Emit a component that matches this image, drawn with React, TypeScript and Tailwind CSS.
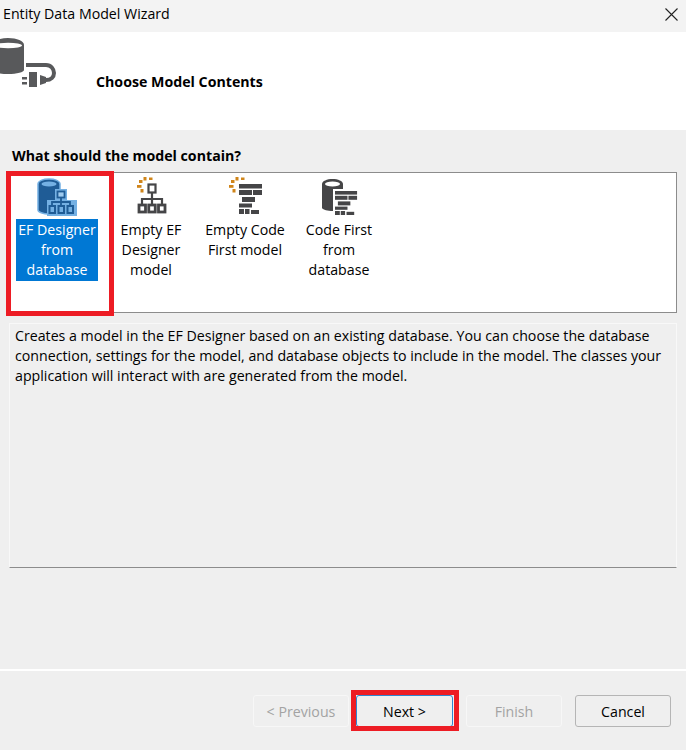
import { FC } from "react";

const dark = "#454547";

const Sparks = ({ x, y }: { x: number; y: number }) => (
    <g fill="#d0851a" transform={`translate(${x} ${y})`}>
        <rect x="6.500" y="0" width="3" height="3.500" />
        <rect x="12" y="0.500" width="3.500" height="2.500" />
        <rect x="2" y="3" width="3.500" height="3" />
        <rect x="0" y="8" width="4.500" height="2.800" />
        <rect x="3.500" y="12" width="3" height="3.500" />
    </g>
);

const BrickStack = () => (
    <g fill={dark}>
        <rect x="0" y="0" width="23" height="4.500" />
        <rect x="0" y="6" width="13" height="5" />
        <rect x="14" y="6" width="9" height="5" />
        <rect x="3" y="13" width="13" height="5" />
        <rect x="0" y="19.500" width="13" height="4" />
        <rect x="0" y="25" width="5" height="5" />
        <rect x="6" y="25" width="4.500" height="5" />
        <rect x="12" y="26" width="8" height="4" />
    </g>
);

const PlugIcon = () => (
    <svg width="60" height="60" viewBox="0 0 60 60" className="shrink-0">
        <path d="M-8 13c0-4 7-7 16-7s16 3 16 7v25c0 2-7 4-16 4s-16-2-16-4z" fill="#58595b" />
        <ellipse cx="8" cy="13.500" rx="14" ry="2.800" fill="#fff" />
        <path d="M26 33h20c5 0 8 4 8 8s-3 7-8 7h-6" fill="none" stroke="#58595b" strokeWidth="4" />
        <path d="M40 43l6 2v6l-6 2z" fill="#58595b" />
        <rect x="29" y="40" width="8" height="15" fill="#58595b" />
        <rect x="22" y="45" width="5" height="2.500" fill="#58595b" />
        <rect x="22" y="50" width="5" height="2.500" fill="#58595b" />
    </svg>
);

const EfDbIcon = () => (
    <svg width="42" height="42" viewBox="0 0 42 42">
        <path d="M2 8c0-3 5-5 11-5s11 2 11 5v28c-3 2-7 2-11 2-6 0-11-2-11-4z" fill="#1f5c96" stroke="#74b0e3" strokeWidth="1.500" />
        <ellipse cx="13" cy="8" rx="7.500" ry="2.500" fill="#74b0e3" />
        <path d="M19 13h12v11h10v16H11V24h8z" fill="#74b0e3" />
        <rect x="21.500" y="15.500" width="7" height="6" fill="#9fcbef" stroke="#1f5c96" strokeWidth="1.800" />
        <path d="M25 22v8M16 30v-4h18v4" fill="none" stroke="#1f5c96" strokeWidth="1.800" />
        <g fill="#74b0e3" stroke="#1f5c96" strokeWidth="2">
            <rect x="13.500" y="30" width="5.500" height="7" />
            <rect x="22.500" y="30" width="5.500" height="7" />
            <rect x="31.500" y="30" width="5.500" height="7" />
        </g>
    </svg>
);

const EmptyEfIcon = () => (
    <svg width="40" height="40" viewBox="0 0 40 40">
        <Sparks x={6} y={1} />
        <g fill="#fff" stroke={dark} strokeWidth="2.200">
            <rect x="17.500" y="8.500" width="7" height="8" />
            <path d="M21 17v11M11 28v-5h20v5" fill="none" />
        </g>
        <g fill="#fff" stroke={dark} strokeWidth="2.800">
            <rect x="8" y="29" width="6.500" height="7" />
            <rect x="17.750" y="29" width="6.500" height="7" />
            <rect x="27.500" y="29" width="6.500" height="7" />
        </g>
    </svg>
);

const EmptyCodeIcon = () => (
    <svg width="40" height="40" viewBox="0 0 40 40">
        <Sparks x={4} y={1} />
        <g transform="translate(14 8)">
            <BrickStack />
        </g>
    </svg>
);

const CodeDbIcon = () => (
    <svg width="40" height="40" viewBox="0 0 40 40">
        <path d="M3 8c0-3 5-5 10.500-5S24 5 24 8v24c-2 2-6 3-10.500 3S4 34 3 32z" fill={dark} />
        <ellipse cx="13.500" cy="8" rx="7.500" ry="2.500" fill="#fff" />
        <rect x="14" y="13" width="26" height="27" fill="#fff" />
        <g transform="translate(16 15) scale(0.96 0.8)">
            <BrickStack />
        </g>
    </svg>
);

const models = [
    { label: ["EF Designer", "from", "database"], icon: <EfDbIcon />, selected: true },
    { label: ["Empty EF", "Designer", "model"], icon: <EmptyEfIcon /> },
    { label: ["Empty Code", "First model"], icon: <EmptyCodeIcon /> },
    { label: ["Code First", "from", "database"], icon: <CodeDbIcon /> },
];

const WizardButton: FC<{ label: string; disabled?: boolean; focused?: boolean; className?: string }> = ({
    label,
    disabled,
    focused,
    className,
}) => (
    <button
        className={`h-8 pt-[1px] rounded-[3px] border text-[14.2px] ${className} ${
            disabled
                ? "border-[#f7f7f7] text-[#a3a3a3]"
                : focused
                  ? "border-[#2f86d0] text-black"
                  : "border-[#b5b5b5] text-black"
        }`}
    >
        {label}
    </button>
);

const App: FC = () => {
    return (
        <div className="relative flex flex-col w-[686px] h-[750px] overflow-hidden bg-[#efefef] text-black font-['Open_Sans','Liberation_Sans',sans-serif]">
            {/* Title bar */}
            <div className="flex items-center justify-between h-8 pb-1 pl-[3px] pr-[8px] bg-[#f3f3f3] text-[14.2px]">
                <span>Entity Data Model Wizard</span>
                <svg width="13" height="13" viewBox="0 0 13 13" stroke="#222" strokeWidth="1.100">
                    <path d="M0.500 0.500l12 12M12.500 0.500l-12 12" />
                </svg>
            </div>

            {/* Header */}
            <div className="flex h-[98px] bg-white">
                <PlugIcon />
                <h1 className="ml-9 mt-[40px] text-[14.2px] font-bold leading-5">Choose Model Contents</h1>
            </div>

            {/* Model list */}
            <div className="px-[9px] pt-[16px]">
                <h2 className="pl-[3px] h-[26px] text-[14.2px] font-bold leading-5">What should the model contain?</h2>
                <div className="flex h-[141px] gap-[4px] pl-[2px] bg-white border border-[#8c8c8c]">
                    {models.map((m) => (
                        <div key={m.label.join(" ")} className="flex flex-col items-center w-[90px] pt-[3px]">
                            <div className="h-[43px]">{m.icon}</div>
                            <div className={`w-[82px] py-[1px] text-center text-[14.2px] leading-5 ${m.selected ? "bg-[#0078d4] text-white" : ""}`}>
                                {m.label.map((line) => (
                                    <div key={line} className="whitespace-nowrap">{line}</div>
                                ))}
                            </div>
                        </div>
                    ))}
                </div>

                {/* Description */}
                <div className="mt-[10px] h-[245px] px-[5px] pt-[2px] border border-[#f8f8f8] border-b-[#8c8c8c] text-[14.2px] leading-5">
                    Creates a model in the EF Designer based on an existing database. You can choose the database
                    connection, settings for the model, and database objects to include in the model. The classes your
                    application will interact with are generated from the model.
                </div>
            </div>

            {/* Footer */}
            <div className="mt-auto h-[81px] border-t-2 border-white flex justify-end pr-[15px] pt-[24px]">
                <WizardButton label="< Previous" disabled className="w-[96px]" />
                <WizardButton label="Next >" focused className="w-[97px] ml-[7px]" />
                <WizardButton label="Finish" disabled className="w-[96px] ml-[13px]" />
                <WizardButton label="Cancel" className="w-[96px] ml-[13px]" />
            </div>

            {/* Red annotation boxes */}
            <div className="absolute left-[6px] top-[171px] w-[108px] h-[145px] border-[5px] border-[#ed1c24]" />
            <div className="absolute left-[351px] top-[690px] w-[108px] h-[41px] border-[5px] border-[#ed1c24]" />
        </div>
    );
};

export default App;
